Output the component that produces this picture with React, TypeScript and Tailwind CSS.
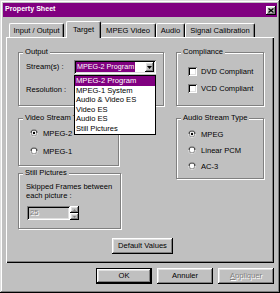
import React from "react";

const raised =
  "bg-[#c0c0c0] shadow-[inset_-1px_-1px_0_#000,inset_1px_1px_0_#fff,inset_-2px_-2px_0_#808080,inset_2px_2px_0_#dfdfdf]";
const sunken =
  "shadow-[inset_1px_1px_0_#808080,inset_-1px_-1px_0_#fff,inset_2px_2px_0_#000,inset_-2px_-2px_0_#dfdfdf]";

function Group({
  label,
  className,
  children,
}: {
  label: string;
  className: string;
  children?: React.ReactNode;
}) {
  return (
    <div
      className={`relative border border-[#808080] shadow-[1px_1px_0_#fff,inset_1px_1px_0_#fff] ${className}`}
    >
      <span className="absolute left-[4px] -top-[6px] bg-[#c0c0c0] px-[2px] leading-[9px] whitespace-nowrap">
        {label}
      </span>
      {children}
    </div>
  );
}

function Radio({ checked, label }: { checked?: boolean; label: string }) {
  return (
    <div className="flex items-center gap-[5px] h-[8px]">
      <svg width="8" height="8" viewBox="0 0 12 12" className="shrink-0">
        <circle cx="6" cy="6" r="5.5" fill="#808080" />
        <path d="M11.5 6 A5.5 5.5 0 0 1 0.5 6" fill="none" stroke="#fff" strokeWidth="1" />
        <circle cx="6" cy="6" r="4.3" fill="#000" />
        <path d="M10.3 6 A4.3 4.3 0 0 1 1.7 6" fill="none" stroke="#dfdfdf" strokeWidth="1" />
        <circle cx="6" cy="6" r="3.6" fill="#fff" />
        {checked && <circle cx="6" cy="6" r="1.8" fill="#000" />}
      </svg>
      <span className="leading-[9px] whitespace-nowrap">{label}</span>
    </div>
  );
}

function Check({ label }: { label: string }) {
  return (
    <div className="flex items-center gap-[4px] h-[9px]">
      <div className={`w-[9px] h-[9px] bg-white shrink-0 ${sunken}`} />
      <span className="leading-[9px] whitespace-nowrap">{label}</span>
    </div>
  );
}

const streams = [
  "MPEG-2 Program",
  "MPEG-1 System",
  "Audio & Video ES",
  "Video ES",
  "Audio ES",
  "Still Pictures",
];

export default function App() {
  return (
    <div className="w-[280px] h-[293px] bg-[#c0c0c0] text-black text-[7.6px] leading-none [font-family:'Liberation_Sans',Arial,sans-serif] p-[3px] shadow-[inset_-1px_-1px_0_#000,inset_1px_1px_0_#dfdfdf,inset_-2px_-2px_0_#808080,inset_2px_2px_0_#fff] flex flex-col">
      {/* Title bar */}
      <div className="h-[14px] bg-[#800080] flex items-center justify-between pl-[2px] pr-[1px]">
        <span className="text-white font-bold text-[7.1px] whitespace-nowrap">Property Sheet</span>
        <div className={`w-[10px] h-[9px] flex items-center justify-center ${raised}`}>
          <svg width="6" height="5" viewBox="0 0 6 5">
            <path d="M0.5 0.5 L5.5 4.5 M5.5 0.5 L0.5 4.5" stroke="#000" strokeWidth="1.3" />
          </svg>
        </div>
      </div>

      {/* Tabs */}
      <div className="mt-[4px] h-[16px] flex items-end pl-[6px]">
        <div className="w-[55px] h-[14px] rounded-t-[2px] border-t border-l border-t-white border-l-white border-r border-r-black shadow-[inset_-1px_0_0_#808080] flex items-center justify-center whitespace-nowrap">
          Input / Output
        </div>
        <div className="relative z-10 ml-[2px] -mb-[1px] w-[35px] h-[17px] bg-[#c0c0c0] rounded-t-[2px] border-t border-l border-t-white border-l-white border-r border-r-black shadow-[inset_-1px_0_0_#808080] flex items-start pt-[4px] justify-center whitespace-nowrap">
          Target
        </div>
        <div className="w-[55px] h-[14px] rounded-t-[2px] border-t border-t-white border-r border-r-black shadow-[inset_-1px_0_0_#808080] flex items-center justify-center whitespace-nowrap">
          MPEG Video
        </div>
        <div className="w-[29px] h-[14px] rounded-t-[2px] border-t border-l border-t-white border-l-white border-r border-r-black shadow-[inset_-1px_0_0_#808080] flex items-center justify-center whitespace-nowrap">
          Audio
        </div>
        <div className="w-[70px] h-[14px] rounded-t-[2px] border-t border-l border-t-white border-l-white border-r border-r-black shadow-[inset_-1px_0_0_#808080] flex items-center justify-center whitespace-nowrap">
          Signal Calibration
        </div>
      </div>

      {/* Panel */}
      <div className="mx-[3px] w-[268px] h-[226px] shadow-[inset_1px_1px_0_#fff,inset_-1px_-1px_0_#000,inset_-2px_-2px_0_#808080] flex flex-col pt-[15px] pl-[12px]">
        <div className="flex gap-[12px]">
          <Group label="Output" className="w-[146px] h-[54px]">
            <div className="flex flex-col pl-[7px] pt-[7px]">
              <div className="flex items-center h-[14px]">
                <span className="w-[48px] whitespace-nowrap">Stream(s) :</span>
                <div className={`relative w-[82px] h-[14px] bg-white flex items-center p-[2px] ${sunken}`}>
                  <span className="bg-[#800080] text-white px-[1px] h-[10px] flex items-center whitespace-nowrap text-[7.2px]">
                    MPEG-2 Program
                  </span>
                  <div className={`ml-auto w-[9px] h-[10px] shrink-0 flex items-center justify-center ${raised}`}>
                    <svg width="5" height="3" viewBox="0 0 5 3">
                      <path d="M0 0 H5 L2.5 3 Z" fill="#000" />
                    </svg>
                  </div>
                  <div className="absolute left-0 top-[15px] z-20 w-[82px] bg-white border border-black">
                    {streams.map((t, i) => (
                      <div
                        key={t}
                        className={
                          i === 0
                            ? "h-[9.6px] flex items-center pl-[1px] bg-[#800080] text-white whitespace-nowrap"
                            : "h-[9.6px] flex items-center pl-[1px] whitespace-nowrap"
                        }
                      >
                        {t}
                      </div>
                    ))}
                  </div>
                </div>
              </div>
              <div className="flex items-center h-[14px] mt-[9px]">Resolution :</div>
            </div>
          </Group>
          <Group label="Compliance" className="w-[88px] h-[54px]">
            <div className="flex flex-col gap-[8px] pl-[11px] pt-[14px]">
              <Check label="DVD Compliant" />
              <Check label="VCD Compliant" />
            </div>
          </Group>
        </div>

        <div className="flex gap-[12px] mt-[12px]">
          <div className="w-[146px] flex flex-col items-start">
            <Group label="Video Stream Type" className="w-[101px] h-[48px]">
              <div className="flex flex-col gap-[10px] pl-[11px] pt-[10px]">
                <Radio checked label="MPEG-2" />
                <Radio label="MPEG-1" />
              </div>
            </Group>
            <Group label="Still Pictures" className="mt-[7px] w-[103px] h-[56px]">
              <div className="flex flex-col pl-[7px] pt-[8px]">
                <div className="leading-[9px] whitespace-nowrap">Skipped Frames between</div>
                <div className="leading-[9px] whitespace-nowrap">each picture :</div>
                <div className="flex mt-[6px] ml-[1px]">
                  <div className={`w-[43px] h-[14px] flex items-center pl-[3px] text-[#808080] [text-shadow:1px_1px_0_#fff] ${sunken}`}>
                    25
                  </div>
                  <div className="flex flex-col w-[9px] h-[14px]">
                    <div className={`h-[7px] flex items-center justify-center ${raised}`}>
                      <svg width="3" height="2" viewBox="0 0 3 2">
                        <path d="M0 2 H3 L1.5 0 Z" fill="#808080" />
                      </svg>
                    </div>
                    <div className={`h-[7px] flex items-center justify-center ${raised}`}>
                      <svg width="3" height="2" viewBox="0 0 3 2">
                        <path d="M0 0 H3 L1.5 2 Z" fill="#808080" />
                      </svg>
                    </div>
                  </div>
                </div>
              </div>
            </Group>
          </div>
          <Group label="Audio Stream Type" className="w-[88px] h-[61px]">
            <div className="flex flex-col gap-[8px] pl-[11px] pt-[11px]">
              <Radio checked label="MPEG" />
              <Radio label="Linear PCM" />
              <Radio label="AC-3" />
            </div>
          </Group>
        </div>

        <div className={`mt-[9px] ml-[94px] w-[61px] h-[16px] flex items-center justify-center whitespace-nowrap ${raised}`}>
          Default Values
        </div>
      </div>

      {/* Buttons */}
      <div className="mt-[5px] flex justify-end gap-[5px] pr-[3px]">
        <div className="w-[56px] h-[16px] border border-black">
          <div className={`w-full h-full flex items-center justify-center ${raised}`}>OK</div>
        </div>
        <div className={`w-[56px] h-[16px] flex items-center justify-center ${raised}`}>Annuler</div>
        <div className={`w-[56px] h-[16px] flex items-center justify-center text-[#808080] [text-shadow:1px_1px_0_#fff] ${raised}`}>
          <span>
            <span className="underline">A</span>ppliquer
          </span>
        </div>
      </div>
    </div>
  );
}
